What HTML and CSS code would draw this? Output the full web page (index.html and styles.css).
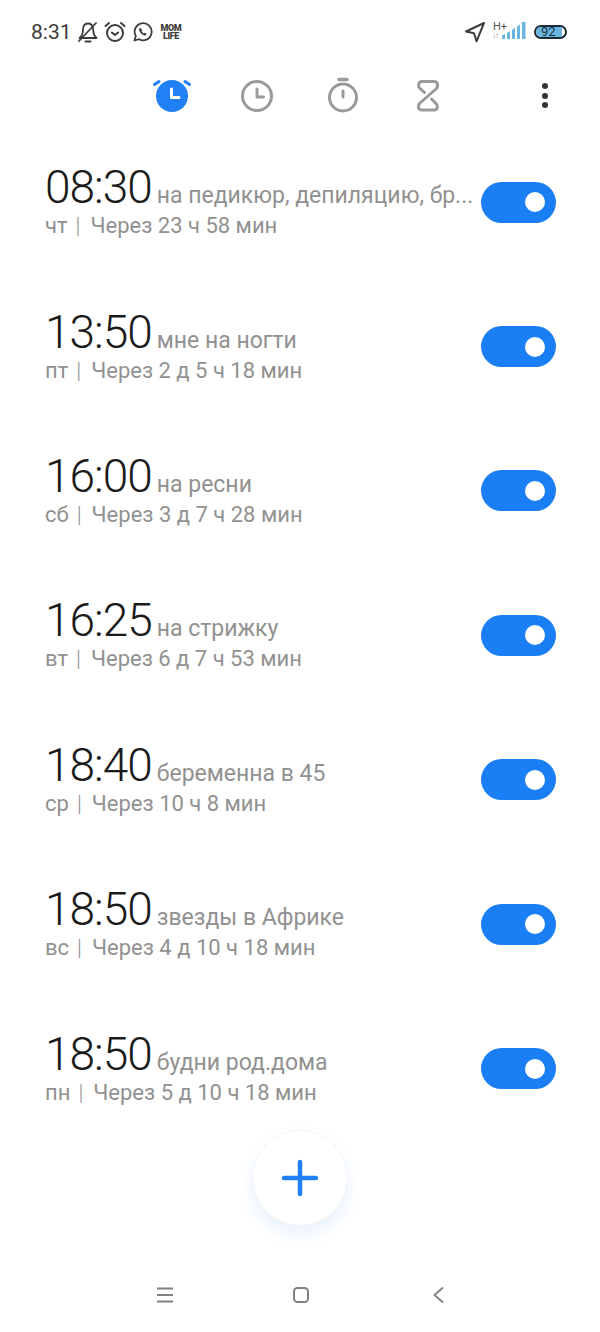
FILE: index.html
```html
<!DOCTYPE html>
<html lang="ru">

<head>
    <meta charset="UTF-8">
    <meta name="viewport" content="width=device-width, initial-scale=1.0">
    <title>Будильник</title>
    <link rel="stylesheet" href="styles.css">
</head>

<body>
    <div class="status-bar">
        <div class="status-left">
            <span class="clock">8:31</span>
            <!-- беззвучный режим -->
            <svg class="st-bell" width="22" height="22" viewBox="0 0 22 22" fill="none" stroke="#3c3c3c" stroke-width="1.8" stroke-linecap="round" stroke-linejoin="round">
                <path d="M2.500 17h17c-1.600-1.500-2.600-3-2.900-5l-.6-4.500c-.4-3-2.400-5-4.900-5s-4.600 2-5 5l-.4 4c-.2 2.200-1.200 4-3.200 5.500z"/>
                <path d="M2 20L19 2"/>
                <path d="M8.500 20.500h5"/>
            </svg>
            <!-- будильник -->
            <svg class="st-alarm" width="22" height="22" viewBox="0 0 22 22" fill="none" stroke="#3c3c3c" stroke-width="2" stroke-linecap="round" stroke-linejoin="round">
                <circle cx="11" cy="12" r="8"/>
                <path d="M7.800 11.500l3.200 2.500 3.200-2.500"/>
                <path d="M1.500 5L5 2M20.500 5L17 2"/>
            </svg>
            <!-- whatsapp -->
            <svg class="st-whatsapp" width="20" height="20" viewBox="0 0 20 20" fill="none" stroke="#3c3c3c" stroke-width="1.800" stroke-linejoin="round">
                <path d="M1.500 18.500l1.300-4.500a8.500 8.500 0 1 1 3.300 3.200z"/>
                <path d="M7 5.800c-1 .8-1.200 2-.5 3.400 1 1.900 2.300 3.200 4.300 4 1.300.5 2.500 0 3-1.200l-2-1.300-1 .8c-1-.5-1.800-1.300-2.300-2.400l.8-1z" fill="#3c3c3c" stroke="none"/>
            </svg>
            <span class="mom-life">MOM<br>LIFE</span>
        </div>
        <div class="status-right">
            <!-- геолокация -->
            <svg width="22" height="22" viewBox="0 0 22 22" fill="none" stroke="#3c3c3c" stroke-width="2" stroke-linejoin="round">
                <path d="M20 2L2 10.500l8 1.800 2.500 8z"/>
            </svg>
            <div class="network">
                <span class="net-type">H+</span>
                <span class="net-arrows">↓↑</span>
                <svg class="net-bars" width="24" height="17" viewBox="0 0 24 17" fill="#69b5e2">
                    <path d="M0 13.500l3-1.500v5H0zM5 11l3-2v8H5zM10 8l3-2.500V17h-3zM15 4.500L18 2.500V17h-3zM20 0h3.500v17H20z"/>
                </svg>
            </div>
            <div class="battery">
                <div class="battery-fill"></div>
                <span class="battery-num">92</span>
            </div>
        </div>
    </div>

    <div class="tabs">
        <!-- будильник, активная вкладка -->
        <svg class="tab-alarm" width="38" height="38" viewBox="0 0 38 38" fill="none">
            <circle cx="19" cy="21" r="16" fill="#2080f4"/>
            <path d="M6 6.500L1.500 9.500M32 6.500L36.500 9.500" stroke="#2080f4" stroke-width="3" stroke-linecap="round"/>
            <path d="M18.500 14v8.500h7.500" stroke="#fff" stroke-width="3" stroke-linecap="round" stroke-linejoin="round"/>
        </svg>
        <!-- часы -->
        <svg class="tab-clock" width="34" height="34" viewBox="0 0 34 34" fill="none" stroke="#9a9a9a" stroke-width="3" stroke-linecap="round" stroke-linejoin="round">
            <circle cx="17" cy="17" r="14.500"/>
            <path d="M17 10v8h6.500"/>
        </svg>
        <!-- секундомер -->
        <svg class="tab-stopwatch" width="34" height="38" viewBox="0 0 34 38" fill="none" stroke="#9a9a9a" stroke-width="3" stroke-linecap="round">
            <circle cx="17" cy="21.500" r="13.500"/>
            <path d="M13 3.500h8" stroke-width="3.500"/>
            <path d="M17 15v6"/>
        </svg>
        <!-- таймер -->
        <svg class="tab-timer" width="26" height="34" viewBox="0 0 26 34" fill="none" stroke="#9a9a9a" stroke-width="3" stroke-linecap="round" stroke-linejoin="round">
            <path d="M9.500 13.500L4.500 9C3 7.500 3 2.500 7 2.500h12c4 0 4.500 4.500 2.500 7l-17 15C2.500 27 3 31 7 31h12c4 0 4-4.500 2.500-6l-5-5"/>
        </svg>
        <div class="tab-more">
            <span class="dot"></span>
            <span class="dot"></span>
            <span class="dot"></span>
        </div>
    </div>

    <div class="alarm-list">
        <div class="alarm-row">
            <div class="alarm-text">
                <div class="alarm-top"><span class="alarm-time">08:30</span><span class="alarm-label">на педикюр, депиляцию, бр...</span></div>
                <div class="alarm-sub">чт<span class="sep">|</span>Через 23 ч 58 мин</div>
            </div>
            <div class="toggle"><span class="knob"></span></div>
        </div>
        <div class="alarm-row">
            <div class="alarm-text">
                <div class="alarm-top"><span class="alarm-time">13:50</span><span class="alarm-label">мне на ногти</span></div>
                <div class="alarm-sub">пт<span class="sep">|</span>Через 2 д 5 ч 18 мин</div>
            </div>
            <div class="toggle"><span class="knob"></span></div>
        </div>
        <div class="alarm-row">
            <div class="alarm-text">
                <div class="alarm-top"><span class="alarm-time">16:00</span><span class="alarm-label">на ресни</span></div>
                <div class="alarm-sub">сб<span class="sep">|</span>Через 3 д 7 ч 28 мин</div>
            </div>
            <div class="toggle"><span class="knob"></span></div>
        </div>
        <div class="alarm-row">
            <div class="alarm-text">
                <div class="alarm-top"><span class="alarm-time">16:25</span><span class="alarm-label">на стрижку</span></div>
                <div class="alarm-sub">вт<span class="sep">|</span>Через 6 д 7 ч 53 мин</div>
            </div>
            <div class="toggle"><span class="knob"></span></div>
        </div>
        <div class="alarm-row">
            <div class="alarm-text">
                <div class="alarm-top"><span class="alarm-time">18:40</span><span class="alarm-label">беременна в 45</span></div>
                <div class="alarm-sub">ср<span class="sep">|</span>Через 10 ч 8 мин</div>
            </div>
            <div class="toggle"><span class="knob"></span></div>
        </div>
        <div class="alarm-row">
            <div class="alarm-text">
                <div class="alarm-top"><span class="alarm-time">18:50</span><span class="alarm-label">звезды в Африке</span></div>
                <div class="alarm-sub">вс<span class="sep">|</span>Через 4 д 10 ч 18 мин</div>
            </div>
            <div class="toggle"><span class="knob"></span></div>
        </div>
        <div class="alarm-row">
            <div class="alarm-text">
                <div class="alarm-top"><span class="alarm-time">18:50</span><span class="alarm-label">будни род.дома</span></div>
                <div class="alarm-sub">пн<span class="sep">|</span>Через 5 д 10 ч 18 мин</div>
            </div>
            <div class="toggle"><span class="knob"></span></div>
        </div>
    </div>

    <div class="add-wrap">
        <button class="add-button">
            <svg width="38" height="38" viewBox="0 0 38 38" stroke="#2080f4" stroke-width="4.500" stroke-linecap="round">
                <path d="M19 3v32M3 19h32"/>
            </svg>
        </button>
    </div>

    <div class="nav-bar">
        <svg width="16" height="16" viewBox="0 0 16 16" stroke="#808080" stroke-width="1.800">
            <path d="M0 1.500h16M0 8h16M0 14.500h16"/>
        </svg>
        <svg class="nav-home" width="16" height="16" viewBox="0 0 16 16" fill="none" stroke="#808080" stroke-width="2">
            <rect x="1" y="1" width="14" height="14" rx="3.500"/>
        </svg>
        <svg class="nav-back" width="11" height="16" viewBox="0 0 11 16" fill="none" stroke="#808080" stroke-width="1.800" stroke-linecap="round" stroke-linejoin="round">
            <path d="M9.500 1L1.500 8l8 7"/>
        </svg>
    </div>
</body>

</html>
```

FILE: styles.css
```css
* {
    box-sizing: border-box;
}

body {
    margin: 0;
    width: 600px;
    height: 1332px;
    overflow: hidden;
    background: #fff;
    font-family: Roboto, "Noto Sans", sans-serif;
    color: #1c1c1c;
}

/* Статус-бар */
.status-bar {
    height: 64px;
    padding: 0 33px 0 31px;
    display: flex;
    justify-content: space-between;
    align-items: center;
}

.status-left {
    display: flex;
    align-items: center;
    gap: 4px;
}

.clock {
    font-size: 21px;
    color: #3c3c3c;
    margin-right: 1px;
}

.st-alarm {
    margin-left: 1px;
}

.st-whatsapp {
    margin-left: 3px;
}

.mom-life {
    margin-left: 4px;
    font-size: 9px;
    line-height: 8px;
    letter-spacing: -0.4px;
    font-weight: 900;
    color: #3c3c3c;
    text-align: center;
}

.status-right {
    display: flex;
    align-items: center;
    gap: 5px;
}

.network {
    position: relative;
    width: 34px;
    height: 20px;
    margin-left: 1px;
}

.net-type {
    position: absolute;
    left: 1px;
    top: -2px;
    font-size: 11px;
    color: #555;
}

.net-arrows {
    position: absolute;
    left: 0;
    bottom: 2px;
    font-size: 8px;
    letter-spacing: -1px;
    color: #999;
}

.net-bars {
    position: absolute;
    right: 0;
    bottom: 3px;
}

.battery {
    position: relative;
    width: 33px;
    height: 14px;
    margin-left: 3px;
    border: 2px solid #1c2a33;
    border-radius: 7px;
    overflow: hidden;
}

.battery-fill {
    width: 90%;
    height: 100%;
    background: #69b5e2;
}

.battery-num {
    position: absolute;
    left: 5px;
    top: -2px;
    font-size: 13px;
    line-height: 14px;
    color: #16303f;
}

/* Вкладки */
.tabs {
    height: 66px;
    display: flex;
    align-items: center;
    padding-left: 153px;
}

.tab-alarm {
    margin-top: -7px;
}

.tab-clock {
    margin-left: 49px;
    margin-top: -2px;
}

.tab-stopwatch {
    margin-left: 52px;
    margin-top: -4px;
}

.tab-timer {
    margin-left: 55px;
    margin-top: -2px;
}

.tab-more {
    display: flex;
    flex-direction: column;
    gap: 3.500px;
    margin-left: 101px;
    margin-top: -3px;
}

.dot {
    width: 6px;
    height: 6px;
    border-radius: 50%;
    background: #333;
}

/* Список будильников */
.alarm-row {
    height: 144.4px;
    padding: 0 44px 0 45px;
    display: flex;
    align-items: center;
    justify-content: space-between;
}

.alarm-text {
    min-width: 0;
    padding-bottom: 4px;
}

.alarm-top {
    display: flex;
    align-items: baseline;
    white-space: nowrap;
}

.alarm-time {
    font-size: 46px;
    line-height: 52px;
    font-weight: 300;
    letter-spacing: -1px;
    color: #1a1a1a;
}

.alarm-label {
    margin-left: 5px;
    font-size: 23px;
    color: #919191;
}

.alarm-sub {
    margin-top: 0;
    font-size: 22px;
    line-height: 26px;
    color: #919191;
}

.sep {
    margin: 0 10px 0 8px;
    font-weight: 300;
}

.toggle {
    flex: none;
    width: 75px;
    height: 41px;
    padding-right: 11px;
    border-radius: 21px;
    background: #1a7ff5;
    display: flex;
    align-items: center;
    justify-content: flex-end;
}

.knob {
    width: 20px;
    height: 20px;
    border-radius: 50%;
    background: #fff;
}

/* Кнопка добавления */
.add-wrap {
    display: flex;
    justify-content: center;
    margin-top: -11px;
}

.add-button {
    width: 96px;
    height: 96px;
    padding: 0;
    border: 1px solid #f2f4f7;
    border-radius: 50%;
    background: #fff;
    box-shadow: 0 8px 16px rgba(32, 128, 244, 0.1);
    display: flex;
    align-items: center;
    justify-content: center;
}

/* Навигация */
.nav-bar {
    margin-top: 61px;
    padding-left: 157px;
    display: flex;
    align-items: center;
}

.nav-home {
    margin-left: 120px;
}

.nav-back {
    margin-left: 124px;
}
```
